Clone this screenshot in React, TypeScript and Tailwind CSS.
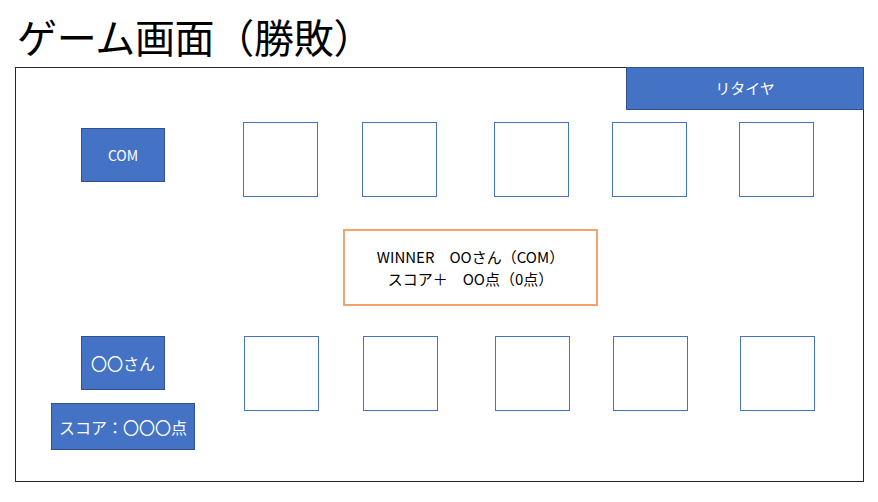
import React from 'react';

const font = { fontFamily: '"Noto Sans CJK JP", "Noto Sans", sans-serif' };

const Card: React.FC<{ className?: string }> = ({ className = '' }) => (
  <div className={`h-[75px] w-[75px] shrink-0 border-[1.5px] border-[#4472c4] bg-white ${className}`} />
);

const App: React.FC = () => {
  return (
    <div className="h-[502px] w-[878px] bg-white text-black" style={font}>
      <h1 className="pl-[17px] pt-[11px] text-[40px] leading-[50px] tracking-[-0.3px]">
        ゲーム画面（勝敗）
      </h1>
      <div className="ml-[15px] mt-[6px] flex h-[415px] w-[849px] flex-col border border-[#262626]">
        {/* retire */}
        <div className="flex justify-end">
          <button className="-mr-px -mt-px flex h-[43px] w-[238px] items-center justify-center border border-[#2f528f] bg-[#4472c4] text-[15px] text-white">
            リタイヤ
          </button>
        </div>

        {/* opponent row */}
        <div className="mt-[12px] flex items-start">
          <div className="ml-[65px] mt-[6px] flex h-[54px] w-[84px] items-center justify-center border border-[#2f528f] bg-[#4472c4] text-[14px] text-white">
            COM
          </div>
          <Card className="ml-[78px]" />
          <Card className="ml-[44px]" />
          <Card className="ml-[57px]" />
          <Card className="ml-[43px]" />
          <Card className="ml-[52px]" />
        </div>

        {/* result */}
        <div className="mt-[32px] flex">
          <div className="ml-[327px] flex h-[77px] w-[255px] flex-col items-center justify-center border-2 border-[#f3a46e] text-[15px] leading-[22px]">
            <span>WINNER　OOさん（COM）</span>
            <span>スコア＋　OO点（0点）</span>
          </div>
        </div>

        {/* player row */}
        <div className="mt-[30px] flex items-start">
          <div className="flex w-[228px] flex-col items-start">
            <div className="ml-[65px] flex h-[54px] w-[84px] items-center justify-center border border-[#2f528f] bg-[#4472c4] text-[16px] text-white">
              〇〇さん
            </div>
            <div className="ml-[35px] mt-[13px] flex h-[47px] w-[144px] items-center justify-center border border-[#2f528f] bg-[#4472c4] text-[16px] text-white">
              スコア：〇〇〇点
            </div>
          </div>
          <Card />
          <Card className="ml-[44px]" />
          <Card className="ml-[57px]" />
          <Card className="ml-[43px]" />
          <Card className="ml-[52px]" />
        </div>
      </div>
    </div>
  );
};

export default App;
